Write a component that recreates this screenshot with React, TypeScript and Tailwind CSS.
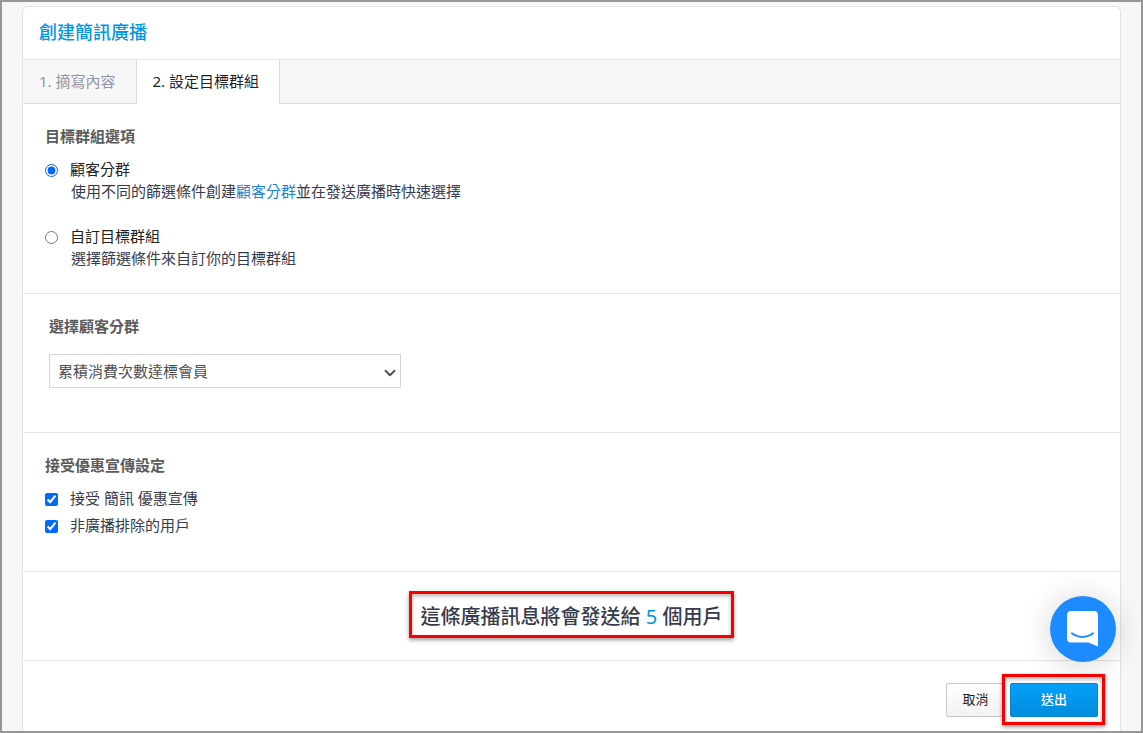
import React, { useState } from 'react';
import { ChevronDown } from 'lucide-react';

const targetOptions = [
  { id: 'segment', label: '顧客分群' },
  { id: 'custom', label: '自訂目標群組' },
];

const segments = ['累積消費次數達標會員'];

const SectionTitle: React.FC<{ children: React.ReactNode }> = ({ children }) => (
  <h2 className="text-[15px] leading-[22px] font-bold text-[#5b5b5b]">{children}</h2>
);

const ChatLauncher: React.FC = () => (
  <button
    type="button"
    aria-label="Chat"
    className="fixed right-[27px] bottom-[71px] flex size-[66px] items-center justify-center rounded-full bg-[#1e8aff] pr-[2px] shadow-[0_2px_30px_rgba(0,0,0,0.18)]"
  >
    <svg width="31" height="36" viewBox="0 0 31 36" fill="none">
      <path d="M4 0h23a4 4 0 0 1 4 4v31.500l-9.500-4H4a4 4 0 0 1-4-4V4a4 4 0 0 1 4-4z" fill="#fff" />
      <path d="M5 22.300c6 4.800 15 4.800 21 0" stroke="#1e8aff" strokeWidth="2" strokeLinecap="round" />
    </svg>
  </button>
);

const App: React.FC = () => {
  const [target, setTarget] = useState('segment');
  const [segment, setSegment] = useState(segments[0]);
  const [acceptSms, setAcceptSms] = useState(true);
  const [notExcluded, setNotExcluded] = useState(true);

  return (
    <div className="flex min-h-screen flex-col border-2 border-[#979797] bg-[#f7f7f7] px-5 pt-1 font-['Noto_Sans','Noto_Sans_CJK_TC',sans-serif] text-[15px] leading-[22px] text-[#373b4d]">
      <main className="flex flex-1 flex-col rounded-t-md border border-b-0 border-[#e3e3e3] bg-white">
        <header className="border-b border-[#e3e3e3] px-4 pt-[13px] pb-[15px]">
          <h1 className="text-lg leading-6 font-medium text-[#0096e6]">創建簡訊廣播</h1>
        </header>

        <nav className="flex h-11 bg-[#f7f7f7]">
          <button type="button" className="border-b border-[#dcdcdc] pr-5 pb-[2px] pl-4 text-[#9295a5]">
            1. 摘寫內容
          </button>
          <button type="button" className="border-x border-[#dcdcdc] bg-white pr-5 pb-[2px] pl-4 text-[#1d1f2a]">
            2. 設定目標群組
          </button>
          <div className="flex-1 border-b border-[#dcdcdc]" />
        </nav>

        <section className="border-b border-[#e3e3e3] px-[22px] pt-[21px] pb-6">
          <SectionTitle>目標群組選項</SectionTitle>
          <div className="mt-[11px] flex flex-col gap-[23px]">
            {targetOptions.map((option) => (
              <div key={option.id}>
                <label className="flex items-center gap-3 text-[#222]">
                  <input
                    type="radio"
                    name="target"
                    className="mt-[2px] size-[13px] accent-[#006aff]"
                    checked={target === option.id}
                    onChange={() => setTarget(option.id)}
                  />
                  {option.label}
                </label>
                <p className="pl-[26px]">
                  {option.id === 'segment' ? (
                    <>
                      使用不同的篩選條件創建
                      <a href="#segments" className="text-[#1c84d2]">顧客分群</a>
                      並在發送廣播時快速選擇
                    </>
                  ) : (
                    '選擇篩選條件來自訂你的目標群組'
                  )}
                </p>
              </div>
            ))}
          </div>
        </section>

        <section className="border-b border-[#e3e3e3] px-[26px] pt-[21px] pb-11">
          <label htmlFor="segment">
            <SectionTitle>選擇顧客分群</SectionTitle>
          </label>
          <div className="mt-[17px] grid w-full max-w-[352px] items-center">
            <select
              id="segment"
              value={segment}
              onChange={(e) => setSegment(e.target.value)}
              className="col-start-1 row-start-1 h-[34px] appearance-none border border-[#d6d6d6] bg-white px-2 text-[#4f4f4f]"
            >
              {segments.map((name) => (
                <option key={name}>{name}</option>
              ))}
            </select>
            <ChevronDown
              size={18}
              strokeWidth={2.5}
              className="pointer-events-none col-start-1 row-start-1 mt-1 mr-[2px] justify-self-end text-[#4f4f4f]"
            />
          </div>
        </section>

        <section className="border-b border-[#e3e3e3] px-[22px] pt-[21px] pb-[35px]">
          <SectionTitle>接受優惠宣傳設定</SectionTitle>
          <div className="mt-[11px] flex flex-col gap-[5px]">
            <label className="flex items-center gap-3">
              <input
                type="checkbox"
                className="mt-[2px] size-[13px] accent-[#006aff]"
                checked={acceptSms}
                onChange={(e) => setAcceptSms(e.target.checked)}
              />
              接受 簡訊 優惠宣傳
            </label>
            <label className="flex items-center gap-3">
              <input
                type="checkbox"
                className="mt-[2px] size-[13px] accent-[#006aff]"
                checked={notExcluded}
                onChange={(e) => setNotExcluded(e.target.checked)}
              />
              非廣播排除的用戶
            </label>
          </div>
        </section>

        <section className="flex justify-center border-b border-[#e3e3e3] pt-[19px] pb-[22px]">
          <p className="border-3 border-[#f90000] px-[9px] pt-[7px] pb-[3px] text-xl leading-[31px] font-medium shadow-[0_2px_4px_rgba(0,0,0,0.4),inset_0_2px_4px_rgba(0,0,0,0.3)]">
            這條廣播訊息將會發送給 <span className="font-normal text-[#0096e6]">5</span> 個用戶
          </p>
        </section>

        <footer className="flex items-center justify-end pt-[13px] pr-[15px] pb-[6px] text-[13px]">
          <button
            type="button"
            className="h-[34px] w-[59px] rounded-xs border border-[#c9c9c9] bg-linear-to-b from-white to-[#f1f1f1] pb-[2px] text-[#222]"
          >
            取消
          </button>
          <div className="-ml-[3px] border-3 border-[#f90000] pt-[6px] pr-1 pb-[5px] pl-[5px] shadow-[0_2px_4px_rgba(0,0,0,0.4),inset_0_2px_4px_rgba(0,0,0,0.3)]">
            <button
              type="button"
              className="block h-[34px] w-[88px] rounded-xs border border-[#0087d2] bg-linear-to-b from-[#06a0f9] to-[#008cdc] pb-[2px] font-medium text-white"
            >
              送出
            </button>
          </div>
        </footer>
      </main>

      <ChatLauncher />
    </div>
  );
};

export default App;
